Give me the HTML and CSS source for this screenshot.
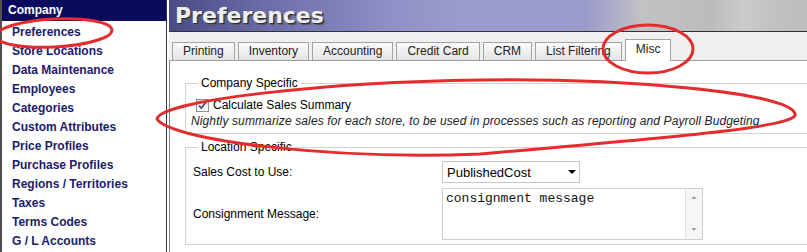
FILE: index.html
```html
<!DOCTYPE html>
<html>
	<head>
		<meta charset="UTF-8">
		<title>Preferences</title>
		<link rel="stylesheet" href="styles.css">
	</head>
	<body>
		<div class="page">
			<div class="sidebar">
				<div class="side-head"><span>Company</span></div>
				<ul class="side-links">
					<li><a href="#">Preferences</a></li>
					<li><a href="#">Store Locations</a></li>
					<li><a href="#">Data Maintenance</a></li>
					<li><a href="#">Employees</a></li>
					<li><a href="#">Categories</a></li>
					<li><a href="#">Custom Attributes</a></li>
					<li><a href="#">Price Profiles</a></li>
					<li><a href="#">Purchase Profiles</a></li>
					<li><a href="#">Regions / Territories</a></li>
					<li><a href="#">Taxes</a></li>
					<li><a href="#">Terms Codes</a></li>
					<li><a href="#">G / L Accounts</a></li>
				</ul>
			</div>

			<div class="main">
				<div class="banner"><h1>Preferences</h1></div>
				<ul class="tabs">
					<li>Printing</li>
					<li>Inventory</li>
					<li>Accounting</li>
					<li>Credit Card</li>
					<li>CRM</li>
					<li>List Filtering</li>
					<li class="ac">Misc</li>
				</ul>
				<div class="panel">
					<fieldset class="group">
						<legend>Company Specific</legend>
						<label class="check">
							<span class="box"><svg width="11" height="11" viewBox="0 0 11 11"><path d="M2 5.5 L4.3 8.2 L9 2" fill="none" stroke="#3d4b74" stroke-width="1.7"/></svg></span>
							Calculate Sales Summary
						</label>
						<p class="hint">Nightly summarize sales for each store, to be used in processes such as reporting and Payroll Budgeting</p>
					</fieldset>
					<fieldset class="group second">
						<legend>Location Specific</legend>
						<div class="form-grid">
							<span class="lbl">Sales Cost to Use:</span>
							<div class="select">PublishedCost<span class="arrow"></span></div>
							<span class="lbl">Consignment Message:</span>
							<div class="memo">
								<div class="memo-text">consignment message</div>
								<div class="memo-bar"><span class="up"></span><span class="down"></span></div>
							</div>
						</div>
					</fieldset>
				</div>
			</div>
		</div>

		<!-- red marks drawn over the screen -->
		<svg class="marks" width="807" height="252" viewBox="0 0 807 252">
			<g fill="none" stroke="#e42c2f" stroke-width="3">
				<ellipse cx="54" cy="33" rx="58" ry="14" transform="rotate(-3 54 33)"/>
				<ellipse cx="648" cy="49" rx="45" ry="24"/>
				<path d="M157 119 C160 100 330 82 480 80 C620 78 790 92 795 114 C800 128 640 140 480 154 C330 160 170 140 157 119 Z"/>
			</g>
		</svg>
	</body>
</html>
```

FILE: styles.css
```css
*{margin: 0;padding: 0;box-sizing: border-box;}
li{list-style: none;}
html,body{height: 100%;overflow: hidden;}
body{font: 12px "Liberation Sans", Arial, sans-serif;color: #000;background: #fff;position: relative;}

.page{display: flex;height: 252px;}

.sidebar{width: 167px;flex: none;border-left: 2px solid #505050;border-right: 1px solid #333;}
.side-head{height: 21px;background: #0b0b5e;padding: 4px 0 0 6px;}
.side-head span{display: block;line-height: 12px;color: #fff;font-weight: bold;}
.side-links{padding: 2px 0 0 10px;}
.side-links a{display: block;line-height: 19px;color: #1b1b6b;font-weight: bold;text-decoration: none;}

.main{flex: 1;min-width: 0;margin-left: 2px;overflow: hidden;display: flex;flex-direction: column;}

.banner{height: 32px;border-bottom: 1px solid #333;background: linear-gradient(to right, #4a4a87 0, #6c6ca8 15%, #9090c6 35%, #9a9acd 45%, #9a9acb 65%, #afafc9 70%, #c2c2c2 74%, #bcbcbc 85%, #cbcbcb 90%, #c1c1c1 95%, #bdbdbd 100%);}
.banner h1{font: bold 22px "DejaVu Sans", Verdana, sans-serif;line-height: 31px;padding-left: 6px;color: #eeeeee;text-shadow: 1px 1px 0 #2c2c3c, 2px 2px 1px #555;}

.tabs{display: flex;align-items: flex-end;height: 29px;padding-left: 3px;background: #f0f0f0;border-bottom: 1px solid #a0a0a0;}
.tabs li{height: 18px;line-height: 17px;padding: 0 10px;margin-right: 3px;border: 1px solid #a4a4a4;border-bottom: none;background: linear-gradient(#fafafa, #e4e4e4);color: #222;}
.tabs li.ac{height: 22px;line-height: 18px;margin-bottom: -1px;background: #fff;}

.panel{flex: 1;border-left: 1px solid #808080;padding-left: 15px;}

.group{border: 1px solid #d2d2d2;margin: 15px -30px 0 0;padding: 0 0 4px 5px;min-width: 0;}
.group legend{margin-left: 7px;padding: 0 3px;line-height: 14px;}
.group.second{margin-top: 6px;}

.check{display: flex;align-items: center;height: 16px;margin-top: 7px;padding-left: 5px;}
.box{width: 13px;height: 13px;margin-right: 4px;border: 1px solid #8e8f8f;background: linear-gradient(#e6e6e6, #fdfdfd);display: flex;align-items: center;justify-content: center;}
.hint{font-style: italic;line-height: 16px;letter-spacing: 0.12px;color: #222;}

.form-grid{display: grid;grid-template-columns: 251px 261px;row-gap: 5px;margin-top: 7px;}
.lbl{align-self: center;padding-left: 2px;}

.select{width: 138px;height: 22px;border: 1px solid #c6c6c6;padding-left: 4px;font-size: 13px;display: flex;align-items: center;justify-content: space-between;}
.arrow{width: 0;height: 0;margin-right: 3px;border-left: 4px solid transparent;border-right: 4px solid transparent;border-top: 4px solid #000;}

.memo{height: 52px;border: 1px solid #cdcdcd;display: flex;}
.memo-text{flex: 1;padding: 2px 3px;font: 13px/15px "Liberation Mono", "Courier New", monospace;color: #111;}
.memo-bar{width: 17px;background: #f6f6f6;border-left: 1px solid #e2e2e2;display: flex;flex-direction: column;justify-content: space-between;align-items: center;padding: 7px 0 8px;}
.memo-bar .up{width: 0;height: 0;border-left: 3px solid transparent;border-right: 3px solid transparent;border-bottom: 3px solid #a8a8a8;}
.memo-bar .down{width: 0;height: 0;border-left: 3px solid transparent;border-right: 3px solid transparent;border-top: 3px solid #a8a8a8;}

.marks{position: absolute;left: 0;top: 0;pointer-events: none;}
```
